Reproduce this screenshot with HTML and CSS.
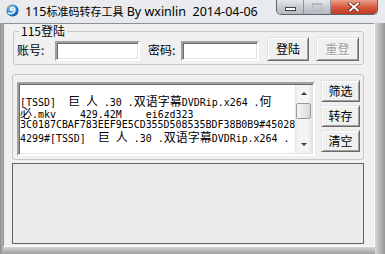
FILE: index.html
```html
<!DOCTYPE html>
<html lang="zh-CN">

<head>
    <meta charset="UTF-8">
    <title>115标准码转存工具</title>
    <link rel="stylesheet" href="styles.css">
</head>

<body>
    <div class="window">
        <div class="titlebar">
            <svg class="app-icon" viewBox="0 0 14 14">
                <defs>
                    <radialGradient id="ball" cx="40%" cy="35%" r="70%">
                        <stop offset="0" stop-color="#9ad6ff" />
                        <stop offset="0.55" stop-color="#2c88d9" />
                        <stop offset="1" stop-color="#0c4c9a" />
                    </radialGradient>
                </defs>
                <circle cx="7.5" cy="7.5" r="6" fill="url(#ball)" />
                <path d="M3.6 10 C6 11.8 10.4 9.6 9.8 6.2 C9.3 3.9 6.4 3.8 5.8 5.6 C5.4 7 7 7.7 7.9 6.8" fill="none" stroke="#fff" stroke-width="1.5" stroke-linecap="round" />
                <path d="M2.2 5.2 Q3 2.6 5.6 1.8" fill="none" stroke="#f2a33a" stroke-width="1" stroke-linecap="round" />
            </svg>
            <span class="title">115<span class="title-cjk">标准码转存工具</span> By wxinlin  2014-04-06</span>
            <div class="caption-buttons">
                <span class="cap-btn cap-min"><i></i></span>
                <span class="cap-btn cap-max"><i></i></span>
                <span class="cap-btn cap-close">
                    <svg viewBox="0 0 12 10" width="12" height="10">
                        <path d="M2 1.5 L10 8.5 M10 1.5 L2 8.5" stroke="#6b2114" stroke-width="3.6" stroke-linecap="square" />
                        <path d="M2 1.5 L10 8.5 M10 1.5 L2 8.5" stroke="#fff" stroke-width="2" stroke-linecap="square" />
                    </svg>
                </span>
            </div>
        </div>

        <div class="frame">
            <div class="client">
                <fieldset class="group group-login">
                    <legend>115登陆</legend>
                    <label class="field-label label-user" for="user">账号:</label>
                    <input class="field input-user" id="user" type="text">
                    <label class="field-label label-pass" for="pass">密码:</label>
                    <input class="field input-pass" id="pass" type="password">
                    <button class="btn btn-login">登陆</button>
                    <button class="btn btn-reset" disabled>重登</button>
                </fieldset>

                <fieldset class="group group-list">
                    <div class="memo">
                        <div class="memo-text">
                            <div class="memo-line">[TSSD]  <span class="cjk">巨</span> <span class="cjk">人</span> .30 .<span class="cjk">双语字幕</span>DVDRip.x264 .<span class="cjk">何</span></div>
                            <div class="memo-line"><span class="cjk">必</span>.mkv    429.42M    ei6zd323</div>
                            <div class="memo-line">3C0187CBAF783EEF9E5CD355D508535BDF38B0B9#45028</div>
                            <div class="memo-line">4299#[TSSD]  <span class="cjk">巨</span> <span class="cjk">人</span> .30 .<span class="cjk">双语字幕</span>DVDRip.x264 .</div>
                        </div>
                        <div class="scrollbar">
                            <span class="sb-arrow sb-up"></span>
                            <span class="sb-track"><span class="sb-thumb"></span></span>
                            <span class="sb-arrow sb-down"></span>
                        </div>
                    </div>
                    <div class="side-buttons">
                        <button class="btn">筛选</button>
                        <button class="btn">转存</button>
                        <button class="btn">清空</button>
                    </div>
                </fieldset>

                <div class="log-panel"></div>
            </div>
        </div>
    </div>
</body>

</html>
```

FILE: styles.css
```css
* {
    box-sizing: border-box;
}

body {
    margin: 0;
    width: 385px;
    height: 254px;
    overflow: hidden;
    font-family: "Noto Sans CJK SC", sans-serif;
    font-size: 12px;
    color: #000;
}

.window {
    width: 385px;
    height: 254px;
    display: flex;
    flex-direction: column;
    background: linear-gradient(to bottom, #e9ebee, #d4d7da);
}

/* title bar */

.titlebar {
    height: 23px;
    flex-shrink: 0;
    display: flex;
    align-items: flex-start;
}

.app-icon {
    width: 14px;
    height: 14px;
    margin: 3px 0 0 5px;
    flex-shrink: 0;
}

.title {
    margin: 5px 0 0 6px;
    font-family: "Noto Sans", "Noto Sans CJK SC", sans-serif;
    font-size: 12.5px;
    line-height: 14px;
    white-space: pre;
}

.title-cjk {
    font-size: 11px;
}

.caption-buttons {
    margin-left: auto;
    margin-right: 7px;
    height: 15px;
    display: flex;
    border: 1px solid #5d6670;
    border-top: none;
    border-radius: 0 0 5px 5px;
    overflow: hidden;
}

.cap-btn {
    height: 100%;
    display: flex;
    align-items: center;
    justify-content: center;
}

.cap-min,
.cap-max {
    width: 27px;
    border-right: 1px solid #8c939b;
    background: linear-gradient(to bottom, #e6e8eb, #c8ccd1 50%, #b4b9bf);
}

.cap-min i {
    width: 11px;
    height: 4px;
    margin-top: 3px;
    background: #fff;
    border: 1px solid #3d4652;
}

.cap-max i {
    width: 10px;
    height: 8px;
    border: 1px solid #b3b8be;
    border-top-width: 2px;
}

.cap-close {
    width: 46px;
    background: linear-gradient(to bottom, #eaa08e, #d65a40 50%, #c23a22);
}

/* frame + client area */

.frame {
    flex: 1;
    display: flex;
    padding: 0 10px 7px 3px;
    background:
        linear-gradient(to right, #8e8e8e, #b4b4b4) left top / 3px 100% no-repeat,
        linear-gradient(to right, #d6d6d6, #bdbdbd 40%, #979797) right top / 10px 100% no-repeat,
        linear-gradient(to bottom, #d3d3d3, #a0a0a0) left bottom / 100% 7px no-repeat,
        #cfcfcf;
}

.client {
    flex: 1;
    display: flex;
    flex-direction: column;
    background: #f0f0f0;
    border-style: solid;
    border-width: 1px;
    border-color: #8c9298 #fbfbfb #fbfbfb #8c9298;
}

.group {
    margin: 0;
    padding: 0;
    min-width: 0;
    border: 1px solid #c4c8cc;
    border-radius: 3px;
}

.group-login {
    margin: 1px 0 0 9px;
    width: 351px;
    padding: 0 3px 3px 3px;
    display: flex;
    align-items: flex-end;
}

.group-login legend {
    margin-left: 2px;
    padding: 0 2px;
    line-height: 12px;
}

.field-label {
    line-height: 20px;
    margin-bottom: 1px;
    white-space: nowrap;
}

.label-user {
    width: 38px;
}

.label-pass {
    width: 33px;
    margin-left: 8px;
}

.field {
    height: 20px;
    margin: 0;
    padding: 0 2px;
    font: inherit;
    background: #fff;
    border: 2px solid;
    border-color: #a0a0a0 #fff #fff #a0a0a0;
    box-shadow: inset 1px 1px #696969, inset -1px -1px #e3e3e3;
    outline: none;
}

.input-user {
    width: 85px;
}

.input-pass {
    width: 78px;
}

.btn {
    margin: 0;
    padding: 0;
    font: inherit;
    line-height: 18px;
    color: #000;
    background: #f0f0f0;
    border: 1px solid;
    border-color: #e3e3e3 #696969 #696969 #e3e3e3;
    box-shadow: inset 1px 1px #fff, inset -1px -1px #a0a0a0;
}

.btn-login {
    width: 42px;
    height: 24px;
    margin-left: 8px;
}

.btn-reset {
    width: 43px;
    height: 24px;
    margin-left: 7px;
    color: #a0a0a0;
    text-shadow: 1px 1px #fff;
}

/* memo with buttons */

.group-list {
    margin: 9px 0 0 8px;
    width: 352px;
    height: 86px;
    padding: 5px 3px 3px 4px;
    display: flex;
    align-items: flex-start;
}

.memo {
    width: 298px;
    height: 74px;
    margin-top: 2px;
    display: flex;
    background: #fff;
    border: 2px solid;
    border-color: #a0a0a0 #fff #fff #a0a0a0;
    box-shadow: inset 1px 1px #696969, inset -1px -1px #e3e3e3;
}

.memo-text {
    flex: 1;
    padding: 11px 0 0 1px;
    overflow: hidden;
    font-family: "DejaVu Sans Mono", monospace;
    font-size: 9.95px;
}

.memo-line {
    height: 12px;
    line-height: 12px;
    white-space: pre;
}

.cjk {
    font-family: "Noto Sans CJK SC", sans-serif;
    font-size: 12px;
    line-height: 12px;
}

.scrollbar {
    width: 17px;
    display: flex;
    flex-direction: column;
    margin: 1px 1px 1px 0;
    background: linear-gradient(to right, #e4e4e4, #f4f4f4 3px, #f4f4f4 13px, #e4e4e4);
}

.sb-arrow {
    height: 17px;
    display: flex;
    align-items: center;
    justify-content: center;
}

.sb-up::before,
.sb-down::before {
    content: "";
    border-left: 3px solid transparent;
    border-right: 3px solid transparent;
}

.sb-up::before {
    border-bottom: 3px solid #3c3c3c;
}

.sb-down::before {
    border-top: 3px solid #3c3c3c;
}

.sb-track {
    flex: 1;
}

.sb-thumb {
    display: block;
    height: 16px;
    margin: 1px 1px 0;
    border: 1px solid #9a9a9a;
    border-radius: 2px;
    background: linear-gradient(to right, #f6f6f6, #e7e7e7 50%, #d8d8d8);
}

.side-buttons {
    margin-left: 6px;
    display: flex;
    flex-direction: column;
    gap: 3px;
}

.side-buttons .btn {
    width: 39px;
    height: 22px;
}

/* bottom panel */

.log-panel {
    margin: 3px 0 0 8px;
    width: 352px;
    height: 81px;
    border: 1px solid #646464;
    background: #ebebeb;
}
```
